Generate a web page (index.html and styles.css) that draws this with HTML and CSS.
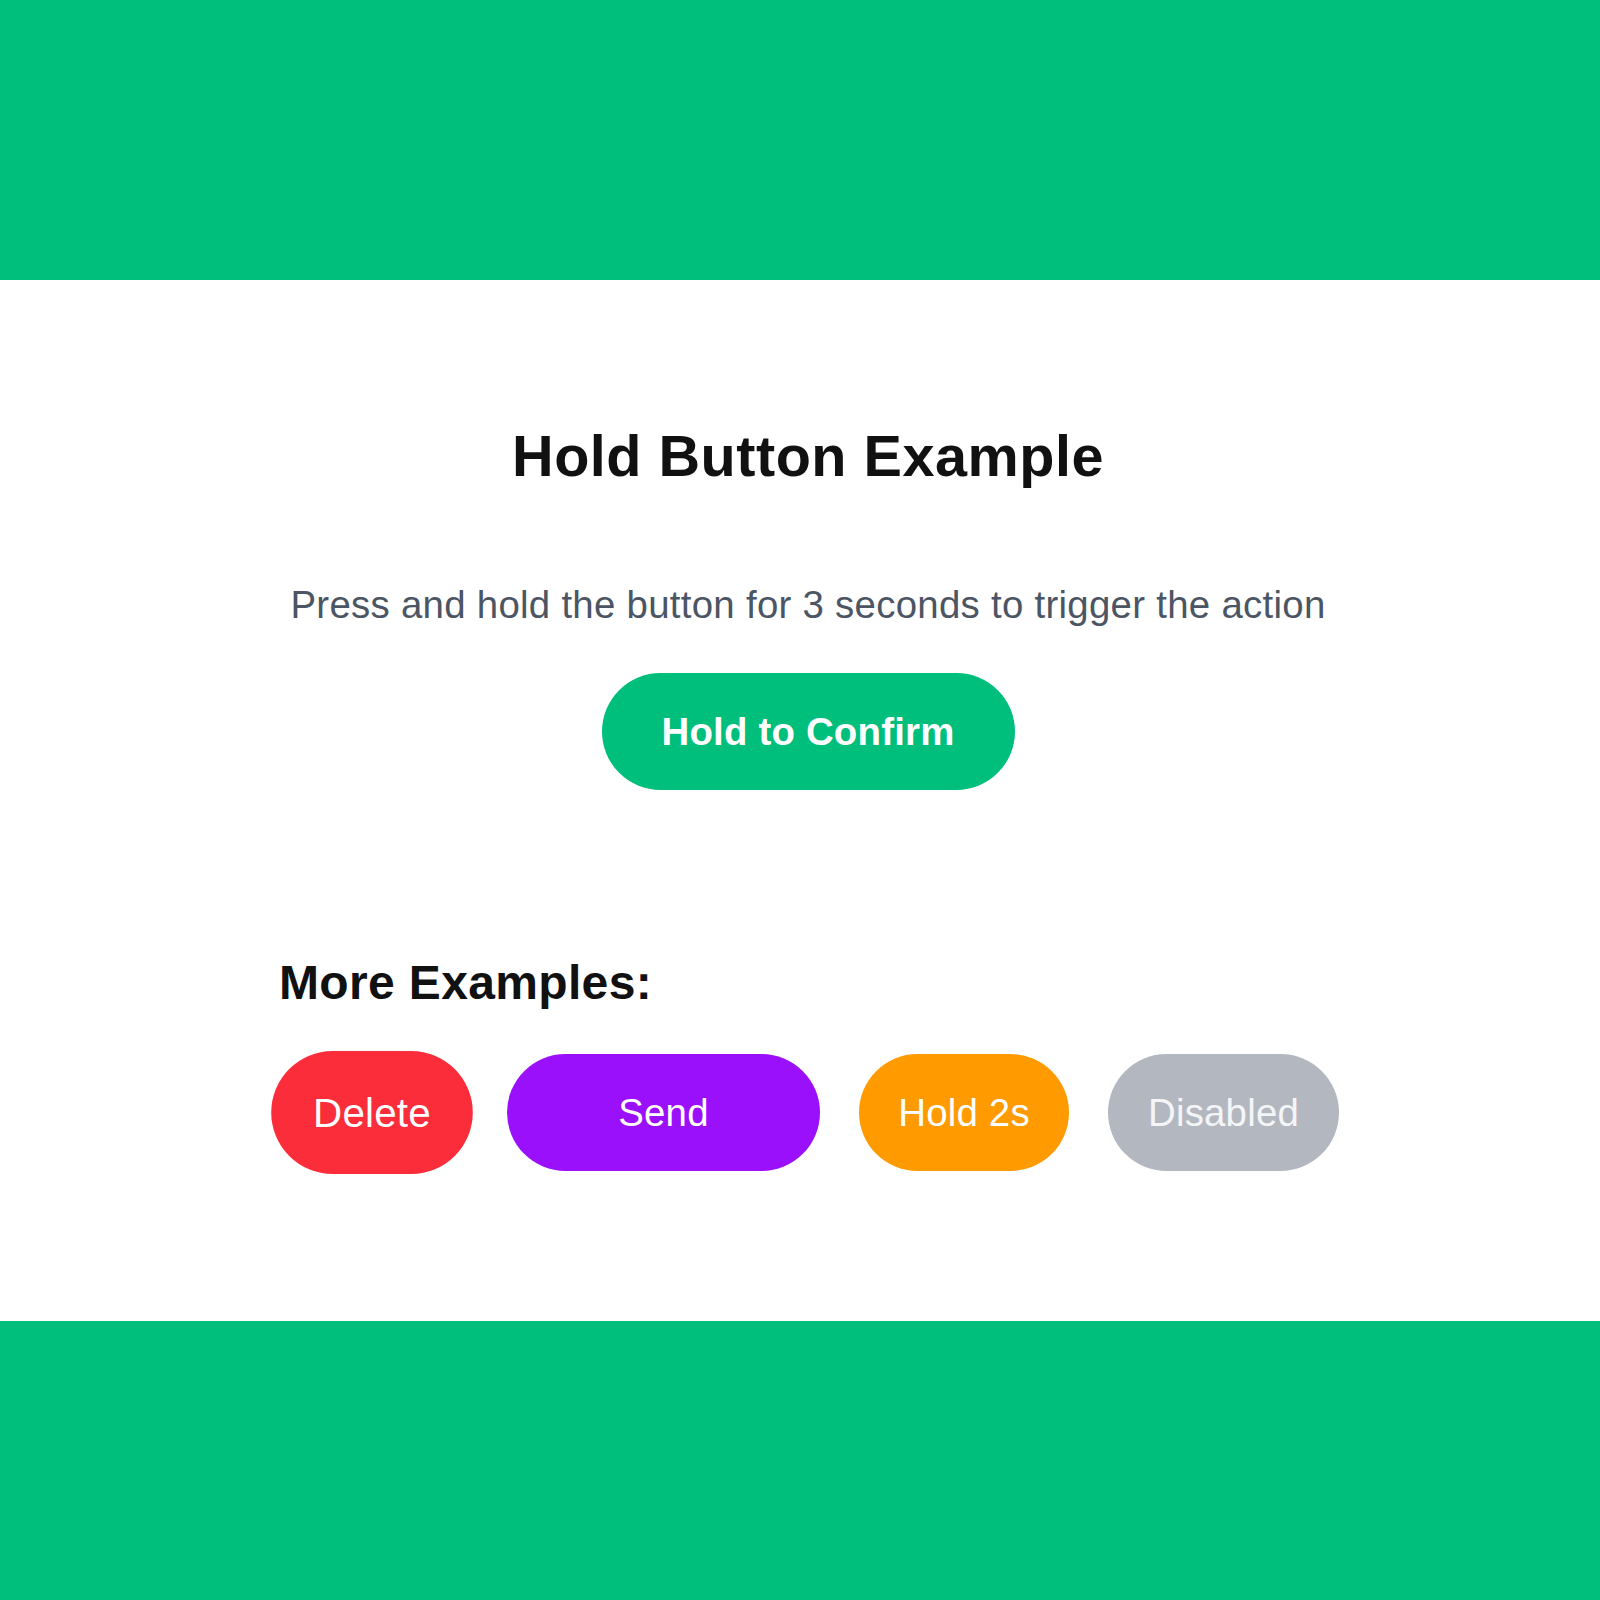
FILE: index.html
```html
<!DOCTYPE html>
<html lang="en">
<head>
<meta charset="utf-8">
<title>Hold Button Example</title>
<link rel="stylesheet" href="styles.css">
</head>
<body>
  <div class="band"></div>
  <section class="stage">
    <div class="container">
      <h1 class="title">Hold Button Example</h1>
      <p class="subtitle">Press and hold the button for 3 seconds to trigger the action</p>
      <div class="main-action">
        <button class="hold-btn">Hold to Confirm</button>
      </div>
      <h2 class="section-title">More Examples:</h2>
      <div class="examples">
        <button class="pill pill-delete">Delete</button>
        <button class="pill pill-send">Send</button>
        <button class="pill pill-hold">Hold 2s</button>
        <button class="pill pill-disabled" disabled>Disabled</button>
      </div>
    </div>
  </section>
  <div class="band band-bottom"></div>
</body>
</html>
```

FILE: styles.css
```css
* {
  box-sizing: border-box;
}

html, body {
  margin: 0;
  padding: 0;
}

body {
  background: #ffffff;
  font-family: "Liberation Sans", Arial, Helvetica, sans-serif;
  width: 1600px;
  height: 1600px;
  display: flex;
  flex-direction: column;
}

.band {
  height: 280px;
  background: #00be7c;
  flex: none;
}

.band-bottom {
  height: 279px;
}

.stage {
  height: 1041px;
  background: #ffffff;
  padding: 143px 0 0 16px;
  flex: none;
}

.container {
  width: 1064px;
  margin: 0 auto;
  display: flex;
  flex-direction: column;
}

.title {
  margin: 0;
  font-size: 57.6px;
  line-height: 66px;
  font-weight: 700;
  letter-spacing: 0.5px;
  color: #111111;
  text-align: center;
}

.subtitle {
  margin: 94px 0 0;
  font-size: 38.4px;
  line-height: 44px;
  letter-spacing: 0.28px;
  color: #4b5563;
  text-align: center;
  white-space: nowrap;
}

.main-action {
  margin-top: 46px;
  display: flex;
  justify-content: center;
}

.hold-btn {
  width: 413px;
  height: 117px;
  border: none;
  border-radius: 58.5px;
  background: #00be7c;
  color: #ffffff;
  font-family: inherit;
  font-size: 38.4px;
  font-weight: 700;
  letter-spacing: 0.2px;
  padding: 0;
  display: flex;
  align-items: center;
  justify-content: center;
}

.section-title {
  margin: 165px 0 0;
  padding-left: 3px;
  font-size: 48px;
  line-height: 55px;
  font-weight: 700;
  letter-spacing: 0.35px;
  color: #111111;
  text-align: left;
}

.examples {
  margin-top: 44px;
  display: flex;
  gap: 39px;
  align-items: flex-start;
}

.pill {
  height: 117px;
  border: none;
  border-radius: 58.5px;
  color: #ffffff;
  font-family: inherit;
  font-size: 38.4px;
  font-weight: 400;
  letter-spacing: 0.2px;
  padding: 0;
  display: flex;
  align-items: center;
  justify-content: center;
  flex: none;
}

.pill-delete {
  width: 192px;
  background: #fc2d3a;
  transform: scale(1.05);
}

.pill-send {
  width: 313px;
  background: #9b10fb;
}

.pill-hold {
  width: 210px;
  background: #ff9b00;
}

.pill-disabled {
  width: 231px;
  background: #b3b7bf;
  color: #f4f5f7;
}
```
